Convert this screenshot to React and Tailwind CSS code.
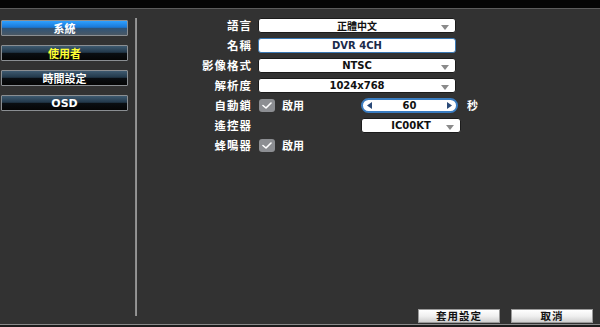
import React from "react";

const cjk = { fontFamily: '"Noto Sans CJK TC", "Noto Sans", sans-serif' };
const lat = { fontFamily: '"DejaVu Sans", "Liberation Sans", sans-serif' };

function Arrow() {
  return (
    <svg width="8" height="5" viewBox="0 0 8 5" className="absolute right-[6px] top-[6px]">
      <polygon points="0,0 8,0 4,5" fill="#8a8a8a" />
    </svg>
  );
}

function Select({ children, latin, width = "w-[198px]" }) {
  return (
    <div
      className={`relative ${width} h-[15px] bg-white rounded-[3px] border border-[#1c1c1c] flex items-center justify-center text-[10px] font-bold text-[#111] leading-none`}
      style={latin ? lat : cjk}
    >
      {children}
      <Arrow />
    </div>
  );
}

function Label({ children }) {
  return (
    <div
      className="w-[121px] pr-[6px] text-right text-[11.5px] font-bold text-white tracking-[1px] leading-none"
      style={cjk}
    >
      {children}
    </div>
  );
}

function Check() {
  return (
    <div className="w-[16px] h-[13px] rounded-[3px] bg-[#8c8e92] flex items-center justify-center">
      <svg width="10" height="7" viewBox="0 0 10 7">
        <polyline points="1,3.5 4,6 9,1" fill="none" stroke="#fff" strokeWidth="1.6" strokeLinecap="round" strokeLinejoin="round" />
      </svg>
    </div>
  );
}

function SideBtn({ children, active, yellow, latin }) {
  const bg = active
    ? "bg-[linear-gradient(to_bottom,#2ea0ff_0%,#1a78d6_45%,#2f5478_52%,#4a5864_100%)]"
    : "bg-[linear-gradient(to_bottom,#3e5a70_0%,#22384a_45%,#0a0e12_52%,#050505_100%)]";
  return (
    <div
      className={`h-[16px] w-[127px] ${bg} border border-[#8a8e92] rounded-[1px] flex items-center justify-center text-[11px] font-bold leading-none ${yellow ? "text-[#ffff33]" : "text-white"}`}
      style={latin ? lat : cjk}
    >
      {children}
    </div>
  );
}

function BottomBtn({ children }) {
  return (
    <div
      className="w-[82px] h-[14px] bg-[linear-gradient(to_bottom,#ffffff_0%,#f0f0f0_50%,#cfcfcf_100%)] border border-[#9a9a9a] flex items-center justify-center text-[10.5px] font-bold text-[#111] leading-none tracking-[1px]"
      style={cjk}
    >
      {children}
    </div>
  );
}

export default function App() {
  return (
    <div className="w-[600px] h-[327px] bg-[#323232] flex flex-col overflow-hidden">
      <div className="h-[8px] bg-[#050505]" />
      <div className="h-[1px] bg-[#5c5c5c]" />
      <div className="h-[315px] flex">
        <div className="w-[135px] pl-[1px] pt-[11px] flex flex-col gap-[9px]">
          <SideBtn active>系統</SideBtn>
          <SideBtn yellow>使用者</SideBtn>
          <SideBtn>時間設定</SideBtn>
          <SideBtn latin>OSD</SideBtn>
        </div>
        <div className="w-[2px] mt-[9px] h-[298px] bg-[linear-gradient(to_right,#6a6a6a,#b0b0b0,#7a7a7a)]" />
        <div className="flex-1 flex flex-col pt-[9px]">
          <div className="flex flex-col gap-[5px]">
            <div className="flex items-center h-[15px]">
              <Label>語言</Label>
              <Select>正體中文</Select>
            </div>
            <div className="flex items-center h-[15px]">
              <Label>名稱</Label>
              <div
                className="w-[198px] h-[15px] bg-white rounded-[3px] border-[1.5px] border-[#3a78b4] flex items-center justify-center text-[10px] font-bold text-[#1a2a4a] leading-none"
                style={lat}
              >
                DVR 4CH
              </div>
            </div>
            <div className="flex items-center h-[15px]">
              <Label>影像格式</Label>
              <Select latin>NTSC</Select>
            </div>
            <div className="flex items-center h-[15px]">
              <Label>解析度</Label>
              <Select latin>1024x768</Select>
            </div>
            <div className="flex items-center h-[15px]">
              <Label>自動鎖</Label>
              <div className="w-[103px] flex items-center gap-[7px] pl-[1px]">
                <Check />
                <span className="text-[11px] font-bold text-white leading-none" style={cjk}>啟用</span>
              </div>
              <div className="relative w-[97px] h-[15px] rounded-full bg-white border-2 border-[#3a7cc0] flex items-center justify-center text-[10px] font-bold text-[#111] leading-none" style={lat}>
                <svg width="5" height="7" viewBox="0 0 5 7" className="absolute left-[4px] top-[2px]">
                  <polygon points="5,0 5,7 0,3.5" fill="#2a4a78" />
                </svg>
                60
                <svg width="5" height="7" viewBox="0 0 5 7" className="absolute right-[4px] top-[2px]">
                  <polygon points="0,0 0,7 5,3.5" fill="#2a4a78" />
                </svg>
              </div>
              <span className="ml-[9px] text-[11px] font-bold text-white leading-none" style={cjk}>秒</span>
            </div>
            <div className="flex items-center h-[15px]">
              <Label>遙控器</Label>
              <div className="w-[103px]" />
              <Select latin width="w-[100px]">IC00KT</Select>
            </div>
            <div className="flex items-center h-[15px]">
              <Label>蜂鳴器</Label>
              <div className="flex items-center gap-[7px] pl-[1px]">
                <Check />
                <span className="text-[11px] font-bold text-white leading-none" style={cjk}>啟用</span>
              </div>
            </div>
          </div>
          <div className="mt-auto mb-[1px] flex justify-end gap-[11px] pr-[7px]">
            <BottomBtn>套用設定</BottomBtn>
            <BottomBtn>取消</BottomBtn>
          </div>
        </div>
      </div>
      <div className="h-[1px] bg-[#8a8a8a]" />
      <div className="flex-1 bg-[#1c1c1c]" />
    </div>
  );
}
